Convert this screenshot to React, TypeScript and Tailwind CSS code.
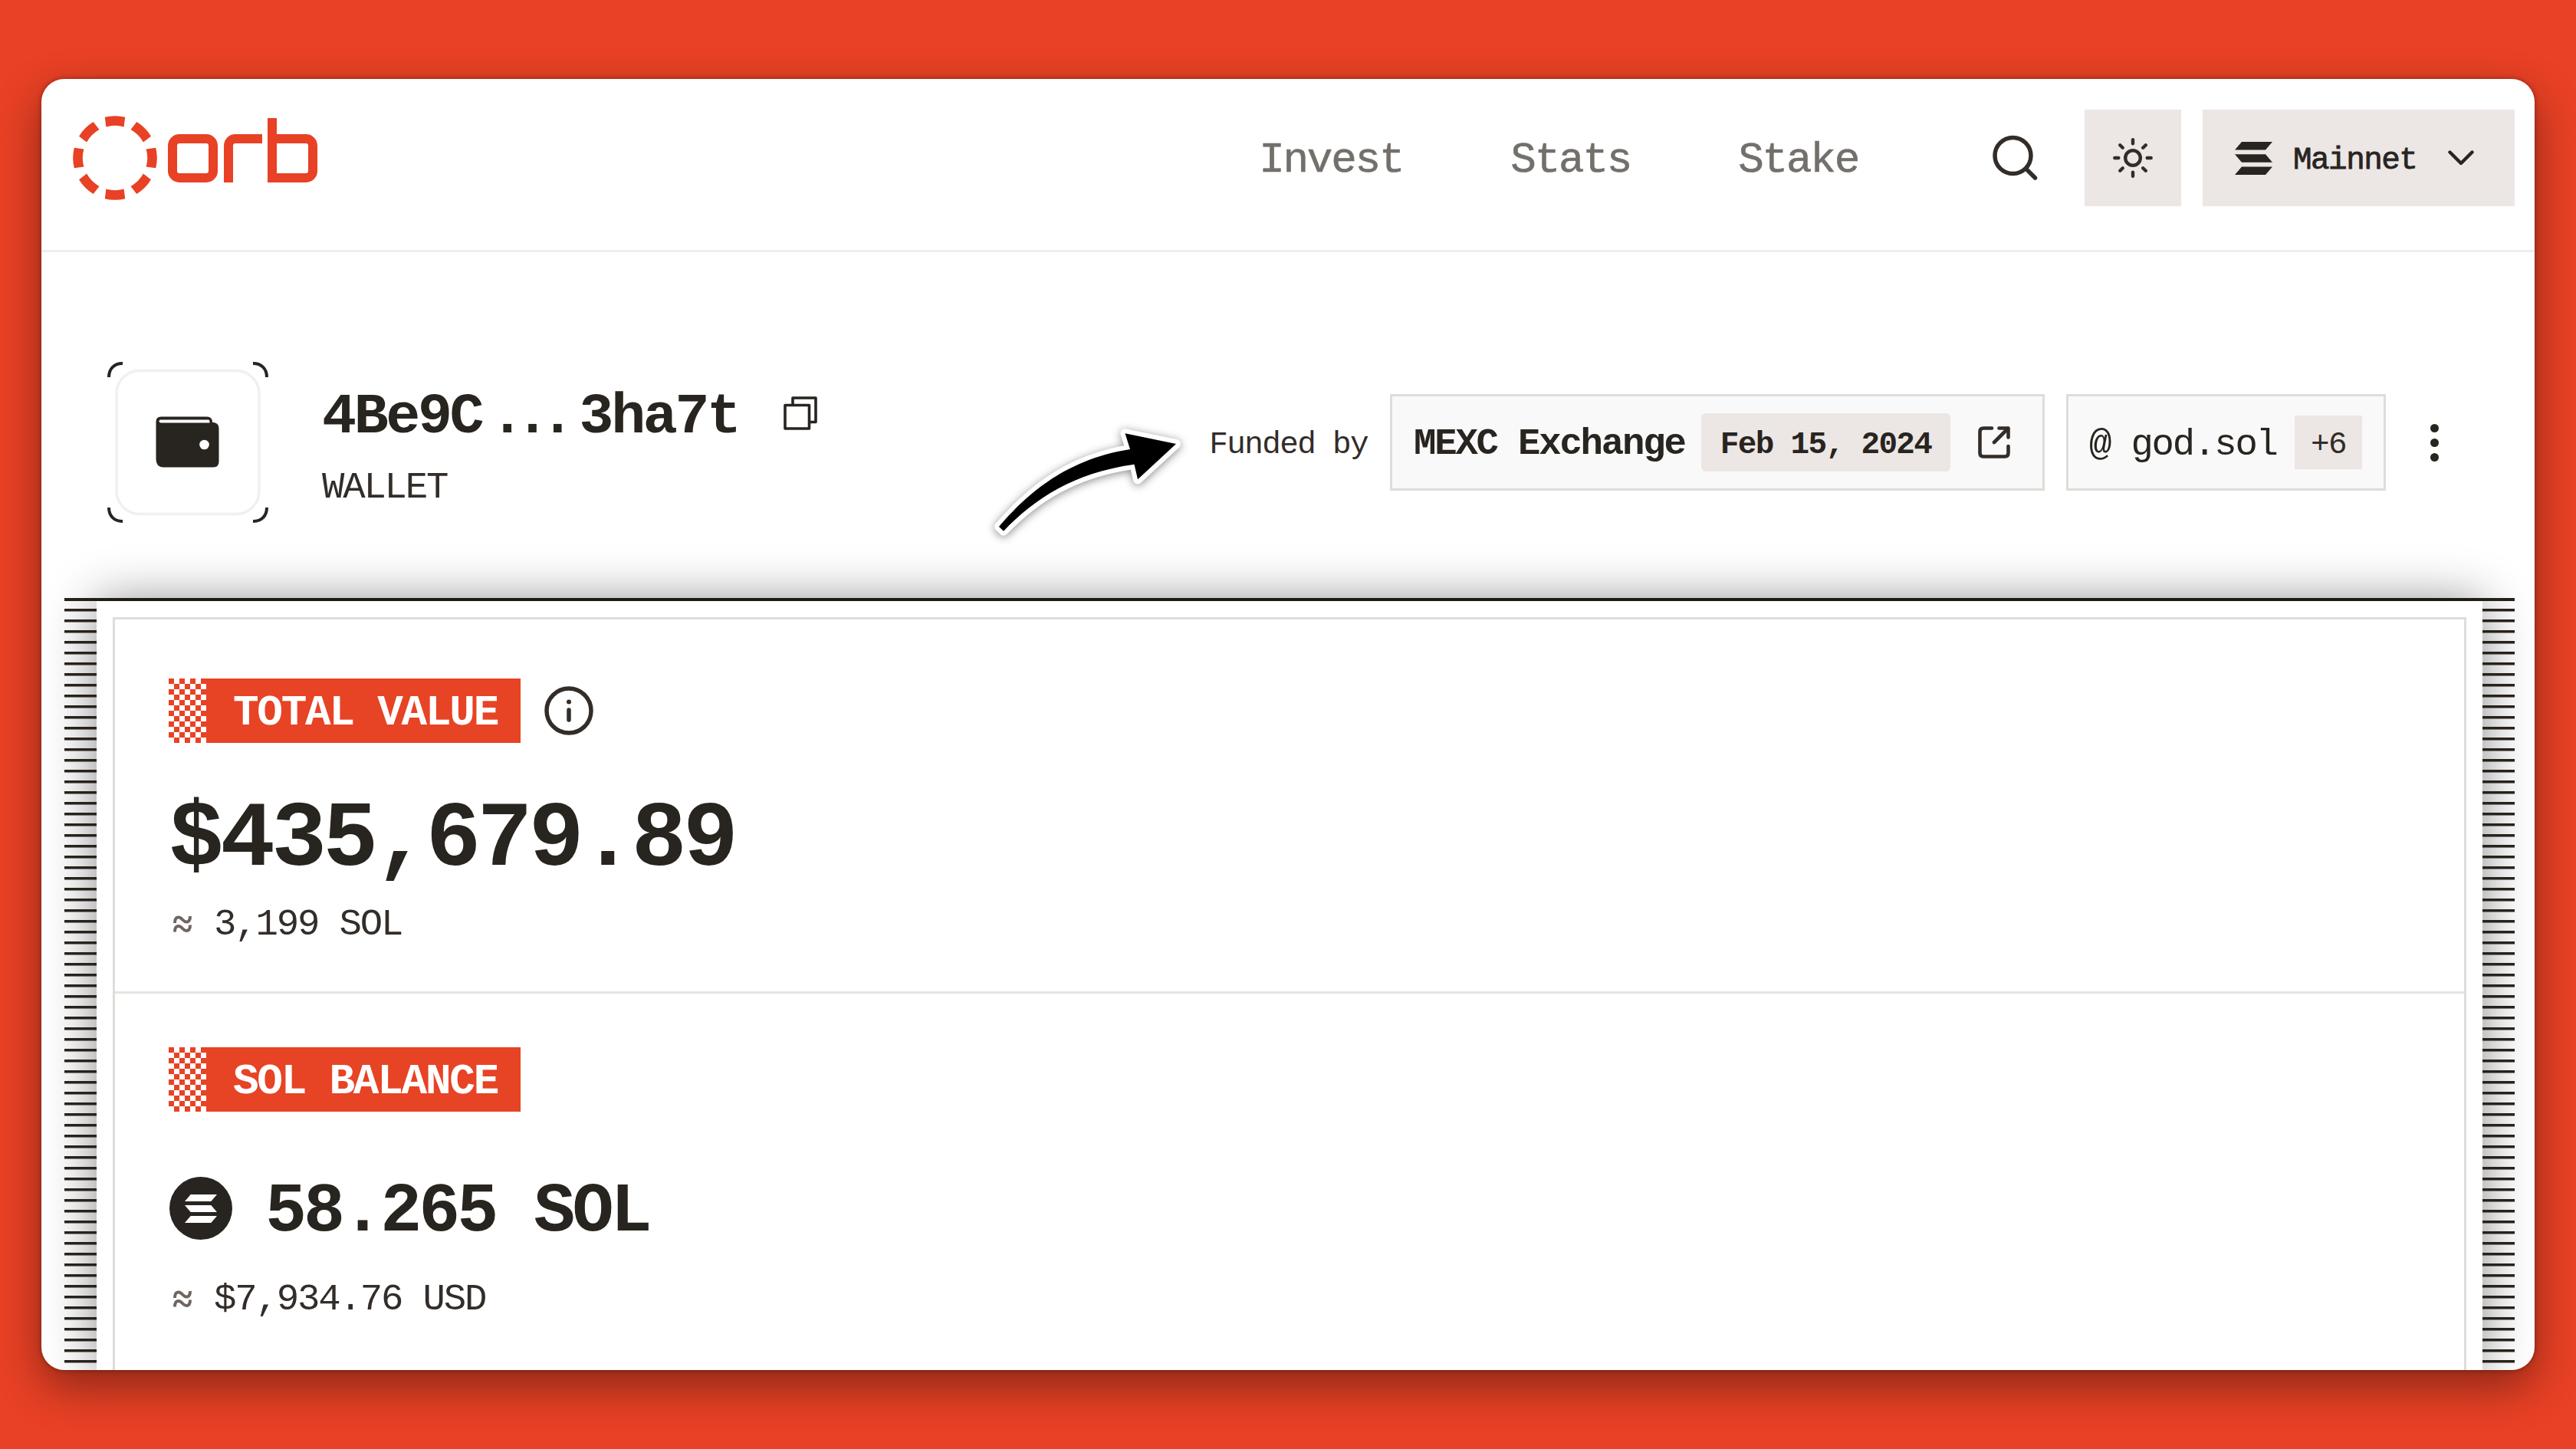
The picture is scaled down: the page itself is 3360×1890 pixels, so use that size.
import React from 'react';

const navItems = ['Invest', 'Stats', 'Stake'];

const SolanaMark: React.FC<{ className?: string }> = ({ className }) => (
  <svg viewBox="0 0 49 43" className={className} fill="currentColor" preserveAspectRatio="none">
    <path d="M9 0H49L40 10.5H0Z" />
    <path d="M0 16.2H40L49 26.7H9Z" />
    <path d="M9 32.5H49L40 43H0Z" />
  </svg>
);

const Logo = () => (
  <div className="flex items-center" role="img" aria-label="orb">
    <svg viewBox="-55 -55 110 110" className="w-[110px] h-[110px] text-[#e84125]">
      {[0, 45, 90, 135, 180, 225, 270, 315].map((angle) => (
        <path
          key={angle}
          transform={`rotate(${angle})`}
          d="M-13.2 -53.2A54.8 54.8 0 0 1 13.2 -53.2L11.6 -40.6A42.2 42.2 0 0 0 -11.6 -40.6Z"
          fill="currentColor"
        />
      ))}
    </svg>
    {/* wordmark */}
    <div className="flex items-end ml-[13.5px] mb-[21px] h-[84px]">
      <div className="w-[65px] h-[63px] border-[12.5px] border-[#e84125] rounded-[15px]" />
      <div className="w-[50px] h-[63px] ml-[8.5px] border-l-[12.5px] border-t-[12.5px] border-[#e84125] rounded-tl-[15px]" />
      <div className="flex items-end ml-[6.5px]">
        <div className="w-[12.5px] h-[84px] bg-[#e84125]" />
        <div className="w-[65px] h-[63px] -ml-[12.5px] border-[12.5px] border-[#e84125] rounded-r-[15px]" />
      </div>
    </div>
  </div>
);

const Header = () => (
  <header className="flex justify-between h-[226px] shrink-0 pl-[41px] pr-[26px] pt-[40px] border-b-[3px] border-[#eeeeee]">
    <div className="h-[126px] flex items-center">
      <Logo />
    </div>
    <div className="flex items-center h-[126px]">
      <nav className="flex gap-[140px] mr-[174px] pt-[6px] text-[56px] leading-none tracking-[-0.04em] text-[#73706b] [-webkit-text-stroke:0.6px]">
        {navItems.map((item) => (
          <a key={item}>{item}</a>
        ))}
      </nav>
      <svg viewBox="0 0 60 60" className="w-[60px] h-[60px] mr-[61px] text-[#332d29]" fill="none" stroke="currentColor" strokeWidth="5.5" strokeLinecap="round">
        <circle cx="27.5" cy="27" r="23.5" />
        <path d="M44.5 44L56.5 56" />
      </svg>
      <button className="flex items-center justify-center w-[126px] h-[126px] mr-7 bg-[#ece7e4] text-[#332d29]">
        <svg viewBox="-26 -26 52 52" className="w-[52px] h-[52px]" fill="none" stroke="currentColor" strokeWidth="4.4" strokeLinecap="round">
          <circle r="9.8" />
          {[0, 45, 90, 135, 180, 225, 270, 315].map((angle) => (
            <path key={angle} d="M0 -18.7V-23.7" transform={`rotate(${angle})`} />
          ))}
        </svg>
      </button>
      <button className="flex items-center w-[407px] h-[126px] pl-[42px] bg-[#ece7e4] text-[#28241f]">
        <SolanaMark className="w-[49px] h-[43px]" />
        <span className="ml-[27px] pt-[7px] text-[41px] leading-none tracking-[-0.038em] [-webkit-text-stroke:0.8px]">Mainnet</span>
        <svg viewBox="0 0 34 20" className="w-[34px] h-5 ml-[41px]" fill="none" stroke="currentColor" strokeWidth="4.4" strokeLinecap="round" strokeLinejoin="round">
          <path d="M2.5 2.5L17 17L31.5 2.5" />
        </svg>
      </button>
    </div>
  </header>
);

const Avatar = () => (
  <svg viewBox="0 0 210 210" className="w-[210px] h-[210px]" fill="none">
    <rect x="12" y="11.5" width="186" height="187" rx="30" stroke="#f2efed" strokeWidth="3.5" />
    <g stroke="#28241f" strokeWidth="4">
      <path d="M2 20C2 9 9 2 20 2" />
      <path d="M190 2C201 2 208 9 208 20" />
      <path d="M2 190C2 201 9 208 20 208" />
      <path d="M190 208C201 208 208 201 208 190" />
    </g>
    <path
      d="M70 71.5H130Q137 71.5 137 79H139Q145.5 80 145.5 87V130Q145.5 137.5 138 137.5H73Q63.5 137 63.5 127V78Q63.5 71.5 70 71.5Z"
      fill="#28241f"
    />
    <path d="M69.5 75.5H132Q133.5 75.5 133.5 79.5H69.5Q67.5 79 67.5 77.5Q67.5 75.5 69.5 75.5Z" fill="#fff" />
    <circle cx="126.5" cy="108" r="6.3" fill="#fff" />
  </svg>
);

const ProfileBar = () => (
  <div className="relative flex items-center h-[451px] shrink-0 pl-[86px] pr-[26px] pt-[45px]">
    <Avatar />
    <div className="ml-[70px] pt-[11px]">
      <div className="flex items-center h-[62px] text-[75px] leading-none font-bold text-[#28241f]">
        <span className="pt-[9px] tracking-[-0.045em]">4Be9C</span>
        <span className="pt-[9px] ml-[11px] tracking-[-0.163em]">...</span>
        <span className="pt-[9px] ml-[18px] tracking-[-0.045em]">3ha7t</span>
        <svg viewBox="0 0 44 44" className="w-11 h-11 mb-[1px] ml-[58px]" fill="none" stroke="currentColor" strokeWidth="3.6" strokeLinejoin="round">
          <path d="M2 11.5H33.5V42H2Z" />
          <path d="M12 11V2H42V33.5H34" />
        </svg>
      </div>
      <div className="mt-[44px] text-[49px] leading-[42px] tracking-[-0.045em] text-[#332d29]">WALLET</div>
    </div>

    {/* pointer towards the funding source */}
    <svg viewBox="1280 540 280 180" className="absolute left-[1226px] top-[211px] w-[280px] h-[180px] drop-shadow-[0_2px_6px_rgba(0,0,0,0.45)]">
      <path
        d="M1303 687C1335 650 1385 600 1474 586L1467.5 565.3L1534 579L1484 625.3L1479.5 605.7C1400 617 1350 650 1309 692.7Z"
        fill="#000"
        stroke="#fff"
        strokeWidth="12"
        strokeLinejoin="round"
        paintOrder="stroke"
      />
    </svg>

    <div className="flex items-center ml-auto text-[#28241f]">
      <span className="mr-[29px] pt-[7px] text-[41px] leading-none tracking-[-0.04em] text-[#332d29]">Funded by</span>
      <div className="flex items-center w-[854px] h-[126px] pl-[28px] border-[3px] border-[#dfddd8] bg-[#f9f9f9]">
        <span className="pt-[5px] text-[49px] leading-none tracking-[-0.045em] font-bold">MEXC Exchange</span>
        <div className="flex items-center justify-center w-[325px] h-[76px] ml-auto mr-[36px] rounded-md bg-[#ece7e4]">
          <span className="pt-[6px] text-[41px] leading-none tracking-[-0.04em] font-bold">Feb 15, 2024</span>
        </div>
        <svg viewBox="0 0 42 42" className="w-[42px] h-[42px] mr-[42px] text-[#332d29]" fill="none" stroke="currentColor" strokeWidth="4.6" strokeLinecap="round" strokeLinejoin="round">
          <path d="M18 2.5H7Q2.5 2.5 2.5 7V35Q2.5 39.5 7 39.5H35Q39.5 39.5 39.5 35V26" />
          <path d="M27.5 2.5H39.5V14.5" />
          <path d="M39 3L21 21" />
        </svg>
      </div>
      <div className="flex items-center w-[417px] h-[126px] ml-7 pl-[27px] border-[3px] border-[#dfddd8] bg-[#f9f9f9]">
        <span className="pt-[6px] text-[49px] leading-none tracking-[-0.045em] whitespace-pre">@ god.sol</span>
        <div className="flex items-center justify-center w-[88px] h-[70px] ml-auto mr-[28px] bg-[#ece7e4] text-[#332d29]">
          <span className="pt-[6px] text-[41px] leading-none tracking-[-0.04em]">+6</span>
        </div>
      </div>
      <div className="flex flex-col items-center gap-[8px] w-[126px]">
        <span className="w-[11px] h-[11px] rounded-full bg-current" />
        <span className="w-[11px] h-[11px] rounded-full bg-current" />
        <span className="w-[11px] h-[11px] rounded-full bg-current" />
      </div>
      <div className="w-[42px]" />
    </div>
  </div>
);

const SectionLabel: React.FC<{ children: React.ReactNode }> = ({ children }) => (
  <div className="flex h-[84px]">
    <div className="w-[49px] bg-[conic-gradient(#fff_25%,#e74325_0_50%,#fff_0_75%,#e74325_0)] bg-[length:14px_14px]" />
    <div className="flex items-center w-[410px] pl-[35px] bg-[#e74325] text-white">
      <span className="pt-[5px] text-[56px] leading-none tracking-[-0.04em] font-bold">{children}</span>
    </div>
  </div>
);

const Approx: React.FC<{ children: React.ReactNode }> = ({ children }) => (
  <div className="flex items-center h-[50px] text-[49px] leading-none text-[#332d29]">
    <svg viewBox="0 0 24 22" className="w-[24px] h-[22px] ml-[6px] mr-[29px] mt-[3px] text-[#6f6661]" fill="none" stroke="currentColor" strokeWidth="4">
      <path d="M2 10C2 1 8 1 12 5.5C16 10 22 10 22 1" />
      <path d="M2 21.5C2 12.5 8 12.5 12 17C16 21.5 22 21.5 22 12.5" />
    </svg>
    <span className="pt-[6px] tracking-[-0.044em]">{children}</span>
  </div>
);

const Stripes = () => (
  <div className="relative z-10 w-[42px] shrink-0 bg-[repeating-linear-gradient(to_bottom,transparent_0_10px,#28221c_10px_13px,#28221c80_13px_14px)]" />
);

const Balances = () => (
  <div className="flex flex-1 min-h-0 ml-[30px] mr-[26px] border-t-[4px] border-[#28221c]">
    <Stripes />
    <div className="flex-1 pt-[21px] px-[21px] bg-white shadow-[0_2px_62px_rgba(0,0,0,0.47)] [clip-path:inset(-80px_-72px_0_-72px)]">
      <div className="h-[1100px] border-[3px] border-[#dfddd8]">
        <div className="h-[488px] pt-[77px] pl-[70px] border-b-[3px] border-[#e6e4e0]">
          <div className="flex items-center">
            <SectionLabel>TOTAL VALUE</SectionLabel>
            <svg viewBox="0 0 64 64" className="w-16 h-16 ml-[31px] text-[#332d29]" fill="none" stroke="currentColor" strokeWidth="5.5" strokeLinecap="round">
              <circle cx="32" cy="32" r="29" />
              <path d="M32 31V44" />
              <circle cx="32" cy="20.5" r="3" fill="currentColor" stroke="none" />
            </svg>
          </div>
          <div className="mt-[67px] h-[120px] text-[120px] leading-[120px] tracking-[-0.041em] font-bold text-[#28241f]">$435,679.89</div>
          <div className="mt-[22px]">
            <Approx>3,199 SOL</Approx>
          </div>
        </div>
        <div className="pt-[70px] pl-[70px]">
          <SectionLabel>SOL BALANCE</SectionLabel>
          <div className="flex items-center h-[82px] ml-[1px] mt-[85px] text-[#28241f]">
            <div className="flex items-center justify-center w-[82px] h-[82px] rounded-full bg-[#28241f] text-white">
              <SolanaMark className="w-[42px] h-[37px]" />
            </div>
            <span className="ml-[43px] pt-[10px] text-[90px] leading-none tracking-[-0.044em] font-bold">58.265 SOL</span>
          </div>
          <div className="mt-[50px]">
            <Approx>$7,934.76 USD</Approx>
          </div>
        </div>
      </div>
    </div>
    <Stripes />
  </div>
);

export default function App() {
  return (
    <div className="w-[3360px] h-[1890px] overflow-hidden bg-[#e84125] pt-[103px] pl-[54px] font-['Liberation_Mono',monospace]">
      <div className="w-[3252px] h-[1684px] rounded-[30px] shadow-[0_22px_56px_rgba(0,0,0,0.4),0_0_6px_rgba(0,0,0,0.35)]">
        <main className="flex flex-col w-full h-full rounded-[30px] overflow-hidden bg-white">
          <Header />
          <ProfileBar />
          <Balances />
        </main>
      </div>
    </div>
  );
}
